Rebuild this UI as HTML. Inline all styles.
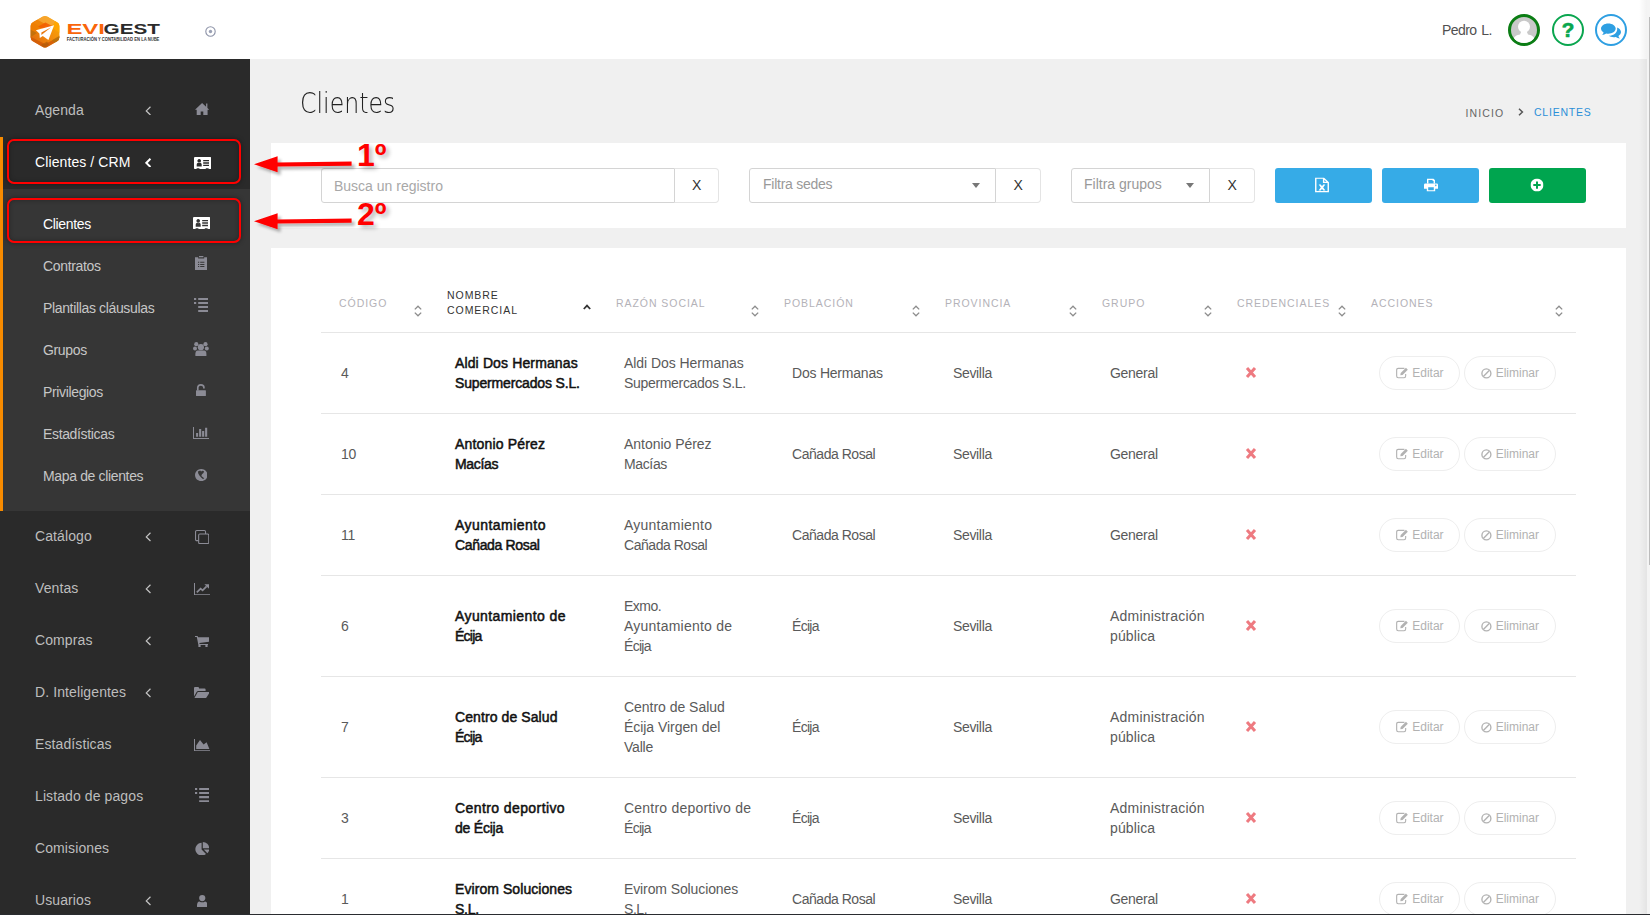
<!DOCTYPE html>
<html lang="es">
<head>
<meta charset="utf-8">
<title>Clientes - Evigest</title>
<style>
*{box-sizing:border-box;margin:0;padding:0}
html,body{width:1650px;height:915px;overflow:hidden;background:#f0f0f0;font-family:"Liberation Sans",sans-serif;font-size:14px;color:#333}
#app{position:relative;width:1650px;height:915px;overflow:hidden}
/* header */
#top{position:absolute;left:0;top:0;width:1650px;height:59px;background:#fff}
#logo{position:absolute;left:28px;top:12px}
#tgl{position:absolute;left:204px;top:25px}
#user{position:absolute;left:1442px;top:22px;font-size:14px;color:#505050;line-height:16px;white-space:nowrap;letter-spacing:-.55px;word-spacing:1.2px}
.circ{position:absolute;top:14px;width:32px;height:32px;border-radius:50%;background:#fff}
/* sidebar */
#side{position:absolute;left:0;top:59px;width:250px;height:856px;background:#2a2a2a;color:#bdbdbd;overflow:hidden}
#side .it{position:absolute;left:35px;height:52px;font-size:14px;line-height:50px;white-space:nowrap;letter-spacing:.1px}
#side .it.on{color:#fff}
#side .ic{position:absolute;line-height:0;color:#8b8b95}
#side .ic svg{display:block}
#side .ch{color:#c4c4c4}
#side .it.on + .ch{color:#fff}
#sub{position:absolute;left:0;top:130px;width:250px;height:322px;background:#363636}
#side .si{position:absolute;left:43px;height:42px;font-size:14px;line-height:42px;white-space:nowrap;color:#c6c6c6;letter-spacing:-.35px}
#side .si.on{color:#fff}
#obar{position:absolute;left:0;top:78px;width:3px;height:374px;background:#f78b00}
.rbox{position:absolute;left:6.6px;width:234.8px;border:2px solid #f00;border-radius:7px;box-shadow:0 0 5px rgba(0,0,0,.4), inset 0 0 5px rgba(0,0,0,.3)}
/* main */
#title{position:absolute;left:300px;top:85.3px;font-size:29px;line-height:36px;color:#222;font-weight:200;font-family:"DejaVu Sans Light","DejaVu Sans","Liberation Sans",sans-serif;transform:scaleX(.815);transform-origin:0 0;white-space:nowrap}
#crumb{position:absolute;left:1465.4px;top:105px;font-size:10.5px;line-height:14px;letter-spacing:.7px;white-space:nowrap;color:#666}
#crumb b{font-weight:normal;color:#2b8fd8}
.panel{position:absolute;left:271px;width:1355px;background:#fff}
#tools{top:143px;height:85px}
#tbl{top:248px;height:680px}
.inp{position:absolute;top:25px;height:35px;border:1px solid #d4d4d4;border-radius:3px;background:#fff;font-size:14px;line-height:33px;color:#999;white-space:nowrap}
.xb{position:absolute;top:25px;height:35px;width:44.4px;border:1px solid #e4e4e4;border-left:0;border-radius:0 4px 4px 0;text-align:center;line-height:33px;font-size:14px;color:#333}
.caret{position:absolute;top:14px;width:0;height:0;border-left:4px solid transparent;border-right:4px solid transparent;border-top:5px solid #777}
.btn{position:absolute;top:25px;width:97px;height:35px;border-radius:3px}
.btn svg{position:absolute;left:50%;top:50%;transform:translate(-50%,-57%)}
.arw{position:absolute}
.blue{background:#36abe7}
.green{background:#00a54f}
/* table */
table{position:absolute;left:50px;top:29px;border-collapse:collapse;table-layout:fixed;width:1255px}
th{height:55px;border-bottom:1px solid #e6e6e6;text-align:left;vertical-align:middle;font-weight:normal;font-size:10.5px;line-height:15px;letter-spacing:.95px;color:#b4b2b8;padding:0 0 1px 18px;position:relative;text-transform:uppercase}
th.act{color:#333}
th .so{position:absolute;right:7px;top:27.7px}
td{border-bottom:1px solid #e6e6e6;padding:20px 0 20px 26px;vertical-align:middle;font-size:14px;line-height:20px;color:#5a5a5a;letter-spacing:-.2px;white-space:nowrap}
td.c0{padding-left:20px}
td.nm{color:#111;font-weight:normal;-webkit-text-stroke:.5px #111;letter-spacing:0}
.ab{display:inline-block;height:34px;border:1px solid #eee;border-radius:17px;font-size:12px;line-height:32px;color:#b2b2b2;padding:0 0 0 16.2px;vertical-align:middle;white-space:nowrap;letter-spacing:0;width:81px}
.ab.el{width:91.8px;padding-left:16px}
.ab svg{vertical-align:-2px;margin-right:3.9px}
td.ac{padding:0 0 0 26px;white-space:nowrap;font-size:0}
.ab+.ab{margin-left:4px}
/* edges */
#botline{position:absolute;left:0;top:914px;width:1650px;height:1px;background:#2a2c30}
#redge{position:absolute;left:1639px;top:0;width:8px;height:915px;background:linear-gradient(90deg,rgba(0,0,0,0),rgba(0,0,0,.05))}
#rstrip{position:absolute;left:1647px;top:0;width:3px;height:915px;background:#f4f4f4}
#thumb{position:absolute;left:1648.7px;top:17px;width:1.3px;height:548px;background:#bcbcbc}
.ann{position:absolute;font:bold 32px/32px "Liberation Sans",sans-serif;color:#f00;text-shadow:3px 3px 4px rgba(0,0,0,.28)}
</style>
</head>
<body>
<div id="app">
<div id="top"><svg id="logo" width="136" height="38" viewBox="0 0 136 38">
<defs><linearGradient id="hg" x1="1" y1="0" x2="0" y2="1"><stop offset="0" stop-color="#fbb000"/><stop offset=".5" stop-color="#f28a0c"/><stop offset="1" stop-color="#d9620f"/></linearGradient></defs>
<clipPath id="hc"><path d="M14.74 4.59 Q17.00 3.30 19.26 4.59 L29.14 10.21 Q31.40 11.50 31.40 14.10 L31.40 25.30 Q31.40 27.90 29.15 29.20 L19.25 34.90 Q17.00 36.20 14.75 34.90 L4.85 29.20 Q2.60 27.90 2.60 25.30 L2.60 14.10 Q2.60 11.50 4.86 10.21 Z"/></clipPath>
<path d="M14.74 4.59 Q17.00 3.30 19.26 4.59 L29.14 10.21 Q31.40 11.50 31.40 14.10 L31.40 25.30 Q31.40 27.90 29.15 29.20 L19.25 34.90 Q17.00 36.20 14.75 34.90 L4.85 29.20 Q2.60 27.90 2.60 25.30 L2.60 14.10 Q2.60 11.50 4.86 10.21 Z" fill="url(#hg)"/>
<g clip-path="url(#hc)">
<polygon points="17,3.5 29,10.4 17,17 5,10.4" fill="#f7a83a" opacity=".75"/>
<polygon points="2,11 9,7.5 19,13 6,19.5 2,17.5" fill="#ee7d00" opacity=".8"/>
<polygon points="32,11 32,21 24,15.5 27,9" fill="#ffa600" opacity=".9"/>
<polygon points="10,14.5 17.5,10.6 25,14.5 17,18" fill="#f25c00" opacity=".85"/>
<polygon points="2,17.5 9,21 2,25.5" fill="#c0700c" opacity=".9"/>
<polygon points="2,24.5 17,32 32,24.5 32,29 17,37 2,29" fill="#cf5a08" opacity=".8"/>
<polygon points="24,28.2 32,23.5 32,28 27,31" fill="#b8720c" opacity=".9"/>
<polygon points="13,33 19,29.5 21,32.5 17,36" fill="#a85a0a" opacity=".6"/>
</g>
<polygon points="26.1,13.3 7.9,18.2 11.4,21.4 11.8,26.1 14.8,24.1 20.4,27.9" fill="#fff"/>
<polygon points="23.2,15.3 13.4,20.4 13.4,23.1" fill="#e8780e"/>
<text x="38.4" y="22.4" font-family="'Liberation Sans',sans-serif" font-weight="bold" font-size="15.2" textLength="38.6" lengthAdjust="spacingAndGlyphs" fill="#f9650a">EVI</text>
<text x="75.6" y="22.4" font-family="'Liberation Sans',sans-serif" font-weight="bold" font-size="15.2" textLength="56.4" lengthAdjust="spacingAndGlyphs" fill="#2b2b2b">GEST</text>
<text x="38.8" y="28.8" font-family="'Liberation Sans',sans-serif" font-weight="bold" font-size="4.9" textLength="92.6" lengthAdjust="spacingAndGlyphs" fill="#333">FACTURACIÓN Y CONTABILIDAD EN LA NUBE</text>
</svg><svg id="tgl" width="13" height="13" viewBox="0 0 13 13"><circle cx="6.5" cy="6.5" r="4.7" fill="none" stroke="#8d93a8" stroke-width="1.1"/><circle cx="6.5" cy="6.5" r="1.7" fill="#9aa0b4"/></svg><div id="user">Pedro L.</div><div class="circ" style="left:1508px;border:3px solid #0b7d14;background:#c9c9c9;overflow:hidden"><svg width="26" height="26" viewBox="0 0 26 26"><circle cx="13" cy="9.8" r="6" fill="#fff"/><path d="M1 28 Q1 18.5 9 17.5 L10.5 14 H15.5 L17 17.5 Q25 18.5 25 28Z" fill="#fff"/></svg></div><div class="circ" style="left:1552px;border:2px solid #0aa64f;color:#0aa64f;font:bold 20.5px/28.2px 'Liberation Sans',sans-serif;text-align:center;-webkit-text-stroke:.7px #0aa64f">?</div><div class="circ" style="left:1595px;border:2px solid #2e9fe2;color:#2e9fe2"><span style="position:absolute;left:4px;top:7px;line-height:0"><svg width="20" height="16.2" viewBox="0 0 18 15" preserveAspectRatio="none" fill="currentColor" ><path d="M6.6 0.4 C10.2 0.4 13.2 2.5 13.2 5.2 C13.2 7.9 10.2 10 6.6 10 C5.9 10 5.3 9.9 4.7 9.8 C3.7 10.6 2.3 11.1 1 11.1 C1.8 10.4 2.2 9.6 2.3 8.8 C0.9 7.9 0 6.6 0 5.2 C0 2.5 3 0.4 6.6 0.4Z"/><path d="M14.4 4.2 C16.5 5 18 6.6 18 8.4 C18 9.8 17.1 11.1 15.7 12 C15.8 12.8 16.2 13.6 17 14.3 C15.7 14.3 14.3 13.8 13.3 13 C12.7 13.1 12.1 13.2 11.4 13.2 C9.6 13.2 8 12.7 6.9 11.9 C11 11.8 14.6 9.4 14.6 5.6 C14.6 5.1 14.5 4.6 14.4 4.2Z"/></svg></span></div></div>
<div id="side"><div id="sub"></div><div class="it" style="top:26px">Agenda</div><span class="ic ch" style="left:145.4px;top:46.7px;width:6.6px;height:9.8px"><svg width="6.6" height="9.8" viewBox="0 0 7 10" preserveAspectRatio="none" fill="none" ><path d="M5.8 0.8 L1.4 5 L5.8 9.2" fill="none" stroke="currentColor" stroke-width="1.3" stroke-linecap="butt"/></svg></span><span class="ic" style="left:194.9px;top:43.7px;width:14.2px;height:12.4px"><svg width="14.2" height="12.4" viewBox="0 0 14.2 12.4" preserveAspectRatio="none" fill="currentColor" ><path d="M7.1 0 L0 6.8 H1.7 V12.4 H5.7 V8.6 H8.3 V12.4 H12.6 V6.8 H14.2 L12.4 5.1 V0.4 H11.1 V3.8Z"/></svg></span><div class="it on" style="top:78px">Clientes / CRM</div><span class="ic ch" style="left:145.4px;top:98.7px;width:6.6px;height:9.8px"><svg width="6.6" height="9.8" viewBox="0 0 7 10" preserveAspectRatio="none" fill="none" ><path d="M5.8 0.8 L1.4 5 L5.8 9.2" fill="none" stroke="currentColor" stroke-width="2.1" stroke-linecap="butt"/></svg></span><span class="ic" style="left:193.8px;top:98px;width:17.2px;height:12.1px;color:#fff"><svg width="17.2" height="12.1" viewBox="0 0 17.2 12.1" preserveAspectRatio="none" fill="currentColor" ><path fill-rule="evenodd" d="M1 0 H16.2 Q17.2 0 17.2 1 V11.1 Q17.2 12.1 16.2 12.1 H14.6 V11.2 H11.8 V12.1 H5.4 V11.2 H2.6 V12.1 H1 Q0 12.1 0 11.1 V1 Q0 0 1 0Z M5.2 2 A1.8 1.8 0 1 0 5.21 2Z M2.7 9.6 H7.7 V7.6 Q7.7 6 6.5 5.7 Q5.2 6.5 3.9 5.7 Q2.7 6 2.7 7.6Z M9.2 2.9 V4.3 H15 V2.9Z M9.2 5.3 V6.7 H15 V5.3Z M9.2 7.7 V9.1 H15 V7.7Z"/></svg></span><div class="si on" style="top:144px">Clientes</div><div class="si" style="top:186px">Contratos</div><div class="si" style="top:228px">Plantillas cláusulas</div><div class="si" style="top:270px">Grupos</div><div class="si" style="top:312px">Privilegios</div><div class="si" style="top:354px">Estadísticas</div><div class="si" style="top:396px">Mapa de clientes</div><span class="ic" style="left:192.9px;top:157.8px;width:17.2px;height:12.2px;color:#fff"><svg width="17.2" height="12.2" viewBox="0 0 17.2 12.1" preserveAspectRatio="none" fill="currentColor" ><path fill-rule="evenodd" d="M1 0 H16.2 Q17.2 0 17.2 1 V11.1 Q17.2 12.1 16.2 12.1 H14.6 V11.2 H11.8 V12.1 H5.4 V11.2 H2.6 V12.1 H1 Q0 12.1 0 11.1 V1 Q0 0 1 0Z M5.2 2 A1.8 1.8 0 1 0 5.21 2Z M2.7 9.6 H7.7 V7.6 Q7.7 6 6.5 5.7 Q5.2 6.5 3.9 5.7 Q2.7 6 2.7 7.6Z M9.2 2.9 V4.3 H15 V2.9Z M9.2 5.3 V6.7 H15 V5.3Z M9.2 7.7 V9.1 H15 V7.7Z"/></svg></span><span class="ic" style="left:194.8px;top:196.9px;width:12.4px;height:14.1px"><svg width="12.4" height="14.1" viewBox="0 0 12.4 14.1" preserveAspectRatio="none" fill="currentColor" ><path fill-rule="evenodd" d="M4 0 H8.4 V1.2 H12.4 V14.1 H0 V1.2 H4Z M3.2 1.2 V2.6 H9.2 V1.2Z M3 5.8 V6.8 H4.2 V5.8Z M5.2 5.8 V6.8 H9.4 V5.8Z M3 7.9 V8.9 H4.2 V7.9Z M5.2 7.9 V8.9 H9.4 V7.9Z M3 10 V11 H4.2 V10Z M5.2 10 V11 H9.4 V10Z"/></svg></span><span class="ic" style="left:193.8px;top:239px;width:14.4px;height:14px"><svg width="14.4" height="14" viewBox="0 0 14.4 14" preserveAspectRatio="none" fill="currentColor" ><path d="M0 0 H2.2 V2 H0Z M0 4 H2.2 V6 H0Z M4.2 0 H14.4 V2 H4.2Z M4.2 4 H14.4 V6 H4.2Z M4.2 8 H14.4 V10 H4.2Z M4.2 12 H14.4 V14 H4.2Z"/></svg></span><span class="ic" style="left:193.1px;top:282.8px;width:15.8px;height:14.2px"><svg width="15.8" height="14.2" viewBox="0 0 15.8 14.2" preserveAspectRatio="none" fill="currentColor" ><circle cx="3.3" cy="2.2" r="2.1"/><circle cx="12.5" cy="2.2" r="2.1"/><circle cx="2" cy="6.4" r="2"/><circle cx="13.8" cy="6.4" r="2"/><circle cx="7.9" cy="5.2" r="3.1"/><path d="M2.4 14.2 Q2 8.6 4.6 8.6 H11.2 Q13.8 8.6 13.4 14.2Z"/></svg></span><span class="ic" style="left:196px;top:324.9px;width:9.9px;height:12.0px"><svg width="9.9" height="12.0" viewBox="0 0 10 12" preserveAspectRatio="none" fill="currentColor" ><path d="M0.5 6.2 H9.5 Q10 6.2 10 6.7 V11.5 Q10 12 9.5 12 H0.5 Q0 12 0 11.5 V6.7 Q0 6.2 0.5 6.2Z"/><path d="M1.8 6.4 V3.6 Q1.8 0.9 4.9 0.9 Q8 0.9 8 3.6 V4.4" fill="none" stroke="currentColor" stroke-width="1.7"/></svg></span><span class="ic" style="left:192.9px;top:368px;width:16.3px;height:12px"><svg width="16.3" height="12" viewBox="0 0 16.3 12" preserveAspectRatio="none" fill="currentColor" ><path d="M0 0 H1 V11 H16.3 V12 H0Z M3.1 6 H5.1 V9.8 H3.1Z M6.1 2 H8.2 V9.8 H6.1Z M9.1 4 H11.2 V9.8 H9.1Z M12.1 0.8 H14.2 V9.8 H12.1Z"/></svg></span><span class="ic" style="left:194.8px;top:409.9px;width:12.5px;height:12.2px"><svg width="12.5" height="12.2" viewBox="0 0 13 13" preserveAspectRatio="none" fill="currentColor" ><path fill-rule="evenodd" d="M6.5 0 A6.5 6.5 0 1 0 6.51 0Z M3 2.6 L5.4 1.6 L6.4 2.6 L7.6 1.8 L9.4 2.4 L8.8 4.2 L7.2 5.6 L6.6 7.4 L8.6 9 L9.6 10.2 L8.2 10.6 L6.4 9 L4.6 6.8 L3.4 4.8Z"/></svg></span><div class="it" style="top:452px">Catálogo</div><span class="ic ch" style="left:145.4px;top:472.8px;width:6.6px;height:9.8px"><svg width="6.6" height="9.8" viewBox="0 0 7 10" preserveAspectRatio="none" fill="none" ><path d="M5.8 0.8 L1.4 5 L5.8 9.2" fill="none" stroke="currentColor" stroke-width="1.3" stroke-linecap="butt"/></svg></span><div class="it" style="top:504px">Ventas</div><span class="ic ch" style="left:145.4px;top:524.8px;width:6.6px;height:9.8px"><svg width="6.6" height="9.8" viewBox="0 0 7 10" preserveAspectRatio="none" fill="none" ><path d="M5.8 0.8 L1.4 5 L5.8 9.2" fill="none" stroke="currentColor" stroke-width="1.3" stroke-linecap="butt"/></svg></span><div class="it" style="top:556px">Compras</div><span class="ic ch" style="left:145.4px;top:576.8px;width:6.6px;height:9.8px"><svg width="6.6" height="9.8" viewBox="0 0 7 10" preserveAspectRatio="none" fill="none" ><path d="M5.8 0.8 L1.4 5 L5.8 9.2" fill="none" stroke="currentColor" stroke-width="1.3" stroke-linecap="butt"/></svg></span><div class="it" style="top:608px">D. Inteligentes</div><span class="ic ch" style="left:145.4px;top:628.8px;width:6.6px;height:9.8px"><svg width="6.6" height="9.8" viewBox="0 0 7 10" preserveAspectRatio="none" fill="none" ><path d="M5.8 0.8 L1.4 5 L5.8 9.2" fill="none" stroke="currentColor" stroke-width="1.3" stroke-linecap="butt"/></svg></span><div class="it" style="top:660px">Estadísticas</div><div class="it" style="top:712px">Listado de pagos</div><div class="it" style="top:764px">Comisiones</div><div class="it" style="top:816px">Usuarios</div><span class="ic ch" style="left:145.4px;top:836.8px;width:6.6px;height:9.8px"><svg width="6.6" height="9.8" viewBox="0 0 7 10" preserveAspectRatio="none" fill="none" ><path d="M5.8 0.8 L1.4 5 L5.8 9.2" fill="none" stroke="currentColor" stroke-width="1.3" stroke-linecap="butt"/></svg></span><span class="ic" style="left:194.9px;top:470.8px;width:14.3px;height:14.2px"><svg width="14.3" height="14.2" viewBox="0 0 14.3 14.2" preserveAspectRatio="none" fill="currentColor" ><rect x="0.55" y="0.55" width="10" height="10.1" rx="1.2" fill="none" stroke="currentColor" stroke-width="1.1"/><rect x="3.65" y="3.95" width="10.1" height="9.7" rx="1.2" fill="#2a2a2a" stroke="currentColor" stroke-width="1.1"/></svg></span><span class="ic" style="left:193.7px;top:524px;width:16.5px;height:12.2px"><svg width="16.5" height="12.2" viewBox="0 0 16.5 12.2" preserveAspectRatio="none" fill="currentColor" ><path d="M0 0 H1 V11.2 H16.5 V12.2 H0Z"/><path d="M2.8 9.4 L6.6 5.6 L8.6 7.4 L12.6 3.4" fill="none" stroke="currentColor" stroke-width="1.7"/><path d="M10.4 1.2 H15 V5.8Z"/></svg></span><span class="ic" style="left:194.9px;top:576.8px;width:14.2px;height:11.4px"><svg width="14.2" height="11.4" viewBox="0 0 14.2 11.4" preserveAspectRatio="none" fill="currentColor" ><path d="M0 0 H2.6 L3.1 1.2 H14.2 V5.8 L4.4 7 L4.6 8 H13 V9 H3.4 L1.8 1 H0Z"/><rect x="3.4" y="9" width="2.2" height="2.4"/><rect x="10.4" y="9" width="2.2" height="2.4"/></svg></span><span class="ic" style="left:193.9px;top:628px;width:15.5px;height:11.1px"><svg width="15.5" height="11.1" viewBox="0 0 15.5 11.1" preserveAspectRatio="none" fill="currentColor" ><path d="M0 9.4 V1 Q0 0 1 0 H4 Q5 0 5 1 V1.6 H10.6 Q11.6 1.6 11.6 2.6 V4 H4.2 Q3.2 4 2.6 5Z"/><path d="M3.8 5 H15.2 Q15.9 5 15.3 5.9 L12.6 10.3 Q12.2 11.1 11.2 11.1 H0.4Z"/></svg></span><span class="ic" style="left:193.7px;top:679.8px;width:16.5px;height:12.2px"><svg width="16.5" height="12.2" viewBox="0 0 16.5 12.2" preserveAspectRatio="none" fill="currentColor" ><path d="M0 0 H1 V11.2 H16.5 V12.2 H0Z M2.2 10 V6.4 L6 1 L9.6 5.6 L12.6 3.2 L15.4 10Z"/></svg></span><span class="ic" style="left:194.9px;top:728.8px;width:14.3px;height:14.2px"><svg width="14.3" height="14.2" viewBox="0 0 14.4 14" preserveAspectRatio="none" fill="currentColor" ><path d="M0 0 H2.2 V2 H0Z M0 4 H2.2 V6 H0Z M4.2 0 H14.4 V2 H4.2Z M4.2 4 H14.4 V6 H4.2Z M4.2 8 H14.4 V10 H4.2Z M4.2 12 H14.4 V14 H4.2Z"/></svg></span><span class="ic" style="left:194.7px;top:782.7px;width:14.3px;height:13.6px"><svg width="14.3" height="13.6" viewBox="0 0 14.3 13.6" preserveAspectRatio="none" fill="currentColor" ><path d="M6.6 0.8 V7.4 L11 12 A6.4 6.4 0 1 1 6.6 0.8Z"/><path d="M7.8 0 A6.5 6.5 0 0 1 14.3 6.2 H7.8Z"/><path d="M8.8 7.4 H14.3 A6.4 6.4 0 0 1 12.4 11.2Z"/></svg></span><span class="ic" style="left:196.9px;top:835.6px;width:10.5px;height:12.5px"><svg width="10.5" height="12.5" viewBox="0 0 10.5 12.5" preserveAspectRatio="none" fill="currentColor" ><circle cx="5.25" cy="3.1" r="3.1"/><path d="M0 11.4 Q-0.2 6.8 2.4 6.4 Q5.25 8.2 8.1 6.4 Q10.7 6.8 10.5 11.4 Q10.5 12.5 9.4 12.5 H1.1 Q0 12.5 0 11.4Z"/></svg></span><div id="obar"></div><div class="rbox" style="top:80px;height:45px"></div><div class="rbox" style="top:138.9px;height:45px"></div></div>
<div id="main"><div id="title">Clientes</div><div id="crumb"><span style="letter-spacing:1.15px;position:relative;top:.5px">INICIO</span><svg width="6" height="8" viewBox="0 0 6 8" style="margin:0 9.8px 0 13.8px;vertical-align:-.3px"><path d="M1 0.8 L4.4 4 L1 7.2" fill="none" stroke="#555" stroke-width="1.5"/></svg><b style="letter-spacing:.78px">CLIENTES</b></div><div id="tools" class="panel"><div class="inp" style="left:50px;width:354px;padding-left:12px;border-radius:3px 0 0 3px;line-height:35px;color:#a8a8a8">Busca un registro</div><div class="xb" style="left:404px">X</div><div class="inp" style="left:478px;width:247px;padding-left:13px;border-radius:3px 0 0 3px;line-height:31px;letter-spacing:-.25px">Filtra sedes<i class="caret" style="left:222px"></i></div><div class="xb" style="left:725px;width:45.3px">X</div><div class="inp" style="left:800px;width:139px;padding-left:12px;border-radius:3px 0 0 3px;line-height:31px">Filtra grupos<i class="caret" style="left:114px"></i></div><div class="xb" style="left:939px;width:45.3px">X</div><div class="btn blue" style="left:1004px"><svg style="margin-left:-1.4px" width="14" height="15" viewBox="0 0 13 15" preserveAspectRatio="none" fill="none" ><path d="M1.4 0.7 H8 L12.3 5 V14.3 H0.7 V0.7Z M8 0.7 V5 H12.3" fill="none" stroke="#fff" stroke-width="1.3"/><path d="M3.4 7 H5.4 L6.5 8.8 L7.6 7 H9.6 L7.6 10 L9.7 13 H7.6 L6.5 11.2 L5.4 13 H3.3 L5.4 10Z" fill="#fff"/></svg></div><div class="btn blue" style="left:1111px"><svg width="14" height="13" viewBox="0 0 14 13" preserveAspectRatio="none" fill="currentColor" ><path fill-rule="evenodd" d="M3 0 H9.4 L11 1.6 V4.6 H9.6 V2.4 H8.6 V1.4 H4.4 V4.6 H3Z M1.4 4.8 H12.6 Q14 4.8 14 6.2 V10.2 H11.2 V13 H2.8 V10.2 H0 V6.2 Q0 4.8 1.4 4.8Z M4.2 8.6 V11.6 H9.8 V8.6Z M11.8 6 A0.7 0.7 0 1 0 11.81 6Z" fill="#fff"/></svg></div><div class="btn green" style="left:1218px"><svg style="margin-left:-.8px" width="13" height="13" viewBox="0 0 13 13" preserveAspectRatio="none" fill="currentColor" ><path fill-rule="evenodd" d="M6.5 0 A6.5 6.5 0 1 0 6.51 0Z M5.5 2.8 V5.5 H2.8 V7.5 H5.5 V10.2 H7.5 V7.5 H10.2 V5.5 H7.5 V2.8Z" fill="#fff"/></svg></div></div><div id="tbl" class="panel"><table><colgroup><col style="width:108px"><col style="width:169px"><col style="width:168px"><col style="width:161px"><col style="width:157px"><col style="width:135px"><col style="width:134px"><col style="width:223px"></colgroup><thead><tr><th>CÓDIGO<span class="so"><svg width="8" height="12" viewBox="0 0 8 12" preserveAspectRatio="none" fill="none" ><path d="M0.8 4.4 L4 1.2 L7.2 4.4 M0.8 7.6 L4 10.8 L7.2 7.6" stroke="#8c8c8c" stroke-width="1.3" fill="none"/></svg></span></th><th class="act"><span style="position:relative;top:-.8px;display:block">NOMBRE<br>COMERCIAL</span><span class="so" style="top:22px"><svg width="8" height="6" viewBox="0 0 8 6" preserveAspectRatio="none" fill="none" ><path d="M0.8 5 L4 1.6 L7.2 5" stroke="#333" stroke-width="1.8" fill="none"/></svg></span></th><th>RAZÓN SOCIAL<span class="so"><svg width="8" height="12" viewBox="0 0 8 12" preserveAspectRatio="none" fill="none" ><path d="M0.8 4.4 L4 1.2 L7.2 4.4 M0.8 7.6 L4 10.8 L7.2 7.6" stroke="#8c8c8c" stroke-width="1.3" fill="none"/></svg></span></th><th>POBLACIÓN<span class="so"><svg width="8" height="12" viewBox="0 0 8 12" preserveAspectRatio="none" fill="none" ><path d="M0.8 4.4 L4 1.2 L7.2 4.4 M0.8 7.6 L4 10.8 L7.2 7.6" stroke="#8c8c8c" stroke-width="1.3" fill="none"/></svg></span></th><th>PROVINCIA<span class="so"><svg width="8" height="12" viewBox="0 0 8 12" preserveAspectRatio="none" fill="none" ><path d="M0.8 4.4 L4 1.2 L7.2 4.4 M0.8 7.6 L4 10.8 L7.2 7.6" stroke="#8c8c8c" stroke-width="1.3" fill="none"/></svg></span></th><th>GRUPO<span class="so"><svg width="8" height="12" viewBox="0 0 8 12" preserveAspectRatio="none" fill="none" ><path d="M0.8 4.4 L4 1.2 L7.2 4.4 M0.8 7.6 L4 10.8 L7.2 7.6" stroke="#8c8c8c" stroke-width="1.3" fill="none"/></svg></span></th><th>CREDENCIALES<span class="so"><svg width="8" height="12" viewBox="0 0 8 12" preserveAspectRatio="none" fill="none" ><path d="M0.8 4.4 L4 1.2 L7.2 4.4 M0.8 7.6 L4 10.8 L7.2 7.6" stroke="#8c8c8c" stroke-width="1.3" fill="none"/></svg></span></th><th>ACCIONES<span class="so" style="right:13px"><svg width="8" height="12" viewBox="0 0 8 12" preserveAspectRatio="none" fill="none" ><path d="M0.8 4.4 L4 1.2 L7.2 4.4 M0.8 7.6 L4 10.8 L7.2 7.6" stroke="#8c8c8c" stroke-width="1.3" fill="none"/></svg></span></th></tr></thead><tbody><tr><td class="c0">4</td><td class="nm"><span style="letter-spacing:0.13px">Aldi Dos Hermanas</span><br><span style="letter-spacing:-0.16px">Supermercados S.L.</span></td><td><span style="letter-spacing:-0.06px">Aldi Dos Hermanas</span><br><span style="letter-spacing:-0.32px">Supermercados S.L.</span></td><td><span style="letter-spacing:-0.22px">Dos Hermanas</span></td><td><span style="letter-spacing:-0.34px">Sevilla</span></td><td><span style="letter-spacing:-0.30px">General</span></td><td class="cr"><svg width="12" height="11" viewBox="0 0 12 11" preserveAspectRatio="none" fill="none" ><path d="M2 1 L10 10 M10 1 L2 10" stroke="#ee7a80" stroke-width="3" stroke-linecap="butt"/></svg></td><td class="ac"><span class="ab"><svg width="12.2" height="11.4" viewBox="0 0 13 12" preserveAspectRatio="none" fill="currentColor" ><path d="M9 1.4 H2.4 Q0.7 1.4 0.7 3.1 V9.6 Q0.7 11.3 2.4 11.3 H8.6 Q10.3 11.3 10.3 9.6 V7.4" fill="none" stroke="currentColor" stroke-width="1.2"/><path d="M4.6 8.6 L5 6.4 L10.6 0.8 L12.6 2.8 L7 8.4Z"/></svg>Editar</span><span class="ab el"><svg width="10.8" height="10.8" viewBox="0 0 12 12" preserveAspectRatio="none" fill="none" ><circle cx="6" cy="6" r="5" fill="none" stroke="currentColor" stroke-width="1.5"/><path d="M2.6 9.4 L9.4 2.6" stroke="currentColor" stroke-width="1.5"/></svg>Eliminar</span></td></tr><tr><td class="c0">10</td><td class="nm"><span style="letter-spacing:0.17px">Antonio Pérez</span><br><span style="letter-spacing:-0.32px">Macías</span></td><td><span style="letter-spacing:-0.03px">Antonio Pérez</span><br><span style="letter-spacing:-0.36px">Macías</span></td><td><span style="letter-spacing:-0.46px">Cañada Rosal</span></td><td><span style="letter-spacing:-0.34px">Sevilla</span></td><td><span style="letter-spacing:-0.30px">General</span></td><td class="cr"><svg width="12" height="11" viewBox="0 0 12 11" preserveAspectRatio="none" fill="none" ><path d="M2 1 L10 10 M10 1 L2 10" stroke="#ee7a80" stroke-width="3" stroke-linecap="butt"/></svg></td><td class="ac"><span class="ab"><svg width="12.2" height="11.4" viewBox="0 0 13 12" preserveAspectRatio="none" fill="currentColor" ><path d="M9 1.4 H2.4 Q0.7 1.4 0.7 3.1 V9.6 Q0.7 11.3 2.4 11.3 H8.6 Q10.3 11.3 10.3 9.6 V7.4" fill="none" stroke="currentColor" stroke-width="1.2"/><path d="M4.6 8.6 L5 6.4 L10.6 0.8 L12.6 2.8 L7 8.4Z"/></svg>Editar</span><span class="ab el"><svg width="10.8" height="10.8" viewBox="0 0 12 12" preserveAspectRatio="none" fill="none" ><circle cx="6" cy="6" r="5" fill="none" stroke="currentColor" stroke-width="1.5"/><path d="M2.6 9.4 L9.4 2.6" stroke="currentColor" stroke-width="1.5"/></svg>Eliminar</span></td></tr><tr><td class="c0">11</td><td class="nm"><span style="letter-spacing:0.46px">Ayuntamiento</span><br><span style="letter-spacing:-0.34px">Cañada Rosal</span></td><td><span style="letter-spacing:0.24px">Ayuntamiento</span><br><span style="letter-spacing:-0.46px">Cañada Rosal</span></td><td><span style="letter-spacing:-0.46px">Cañada Rosal</span></td><td><span style="letter-spacing:-0.34px">Sevilla</span></td><td><span style="letter-spacing:-0.30px">General</span></td><td class="cr"><svg width="12" height="11" viewBox="0 0 12 11" preserveAspectRatio="none" fill="none" ><path d="M2 1 L10 10 M10 1 L2 10" stroke="#ee7a80" stroke-width="3" stroke-linecap="butt"/></svg></td><td class="ac"><span class="ab"><svg width="12.2" height="11.4" viewBox="0 0 13 12" preserveAspectRatio="none" fill="currentColor" ><path d="M9 1.4 H2.4 Q0.7 1.4 0.7 3.1 V9.6 Q0.7 11.3 2.4 11.3 H8.6 Q10.3 11.3 10.3 9.6 V7.4" fill="none" stroke="currentColor" stroke-width="1.2"/><path d="M4.6 8.6 L5 6.4 L10.6 0.8 L12.6 2.8 L7 8.4Z"/></svg>Editar</span><span class="ab el"><svg width="10.8" height="10.8" viewBox="0 0 12 12" preserveAspectRatio="none" fill="none" ><circle cx="6" cy="6" r="5" fill="none" stroke="currentColor" stroke-width="1.5"/><path d="M2.6 9.4 L9.4 2.6" stroke="currentColor" stroke-width="1.5"/></svg>Eliminar</span></td></tr><tr><td class="c0">6</td><td class="nm"><span style="letter-spacing:0.40px">Ayuntamiento de</span><br><span style="letter-spacing:-0.76px">Écija</span></td><td><span style="letter-spacing:-0.49px">Exmo.</span><br><span style="letter-spacing:0.23px">Ayuntamiento de</span><br><span style="letter-spacing:-0.71px">Écija</span></td><td><span style="letter-spacing:-0.71px">Écija</span></td><td><span style="letter-spacing:-0.34px">Sevilla</span></td><td><span style="letter-spacing:0.21px">Administración</span><br><span style="letter-spacing:0.11px">pública</span></td><td class="cr"><svg width="12" height="11" viewBox="0 0 12 11" preserveAspectRatio="none" fill="none" ><path d="M2 1 L10 10 M10 1 L2 10" stroke="#ee7a80" stroke-width="3" stroke-linecap="butt"/></svg></td><td class="ac"><span class="ab"><svg width="12.2" height="11.4" viewBox="0 0 13 12" preserveAspectRatio="none" fill="currentColor" ><path d="M9 1.4 H2.4 Q0.7 1.4 0.7 3.1 V9.6 Q0.7 11.3 2.4 11.3 H8.6 Q10.3 11.3 10.3 9.6 V7.4" fill="none" stroke="currentColor" stroke-width="1.2"/><path d="M4.6 8.6 L5 6.4 L10.6 0.8 L12.6 2.8 L7 8.4Z"/></svg>Editar</span><span class="ab el"><svg width="10.8" height="10.8" viewBox="0 0 12 12" preserveAspectRatio="none" fill="none" ><circle cx="6" cy="6" r="5" fill="none" stroke="currentColor" stroke-width="1.5"/><path d="M2.6 9.4 L9.4 2.6" stroke="currentColor" stroke-width="1.5"/></svg>Eliminar</span></td></tr><tr><td class="c0">7</td><td class="nm"><span style="letter-spacing:0.09px">Centro de Salud</span><br><span style="letter-spacing:-0.76px">Écija</span></td><td><span style="letter-spacing:-0.03px">Centro de Salud</span><br><span style="letter-spacing:-0.05px">Écija Virgen del</span><br><span style="letter-spacing:-0.20px">Valle</span></td><td><span style="letter-spacing:-0.71px">Écija</span></td><td><span style="letter-spacing:-0.34px">Sevilla</span></td><td><span style="letter-spacing:0.21px">Administración</span><br><span style="letter-spacing:0.11px">pública</span></td><td class="cr"><svg width="12" height="11" viewBox="0 0 12 11" preserveAspectRatio="none" fill="none" ><path d="M2 1 L10 10 M10 1 L2 10" stroke="#ee7a80" stroke-width="3" stroke-linecap="butt"/></svg></td><td class="ac"><span class="ab"><svg width="12.2" height="11.4" viewBox="0 0 13 12" preserveAspectRatio="none" fill="currentColor" ><path d="M9 1.4 H2.4 Q0.7 1.4 0.7 3.1 V9.6 Q0.7 11.3 2.4 11.3 H8.6 Q10.3 11.3 10.3 9.6 V7.4" fill="none" stroke="currentColor" stroke-width="1.2"/><path d="M4.6 8.6 L5 6.4 L10.6 0.8 L12.6 2.8 L7 8.4Z"/></svg>Editar</span><span class="ab el"><svg width="10.8" height="10.8" viewBox="0 0 12 12" preserveAspectRatio="none" fill="none" ><circle cx="6" cy="6" r="5" fill="none" stroke="currentColor" stroke-width="1.5"/><path d="M2.6 9.4 L9.4 2.6" stroke="currentColor" stroke-width="1.5"/></svg>Eliminar</span></td></tr><tr><td class="c0">3</td><td class="nm"><span style="letter-spacing:0.41px">Centro deportivo</span><br><span style="letter-spacing:-0.23px">de Écija</span></td><td><span style="letter-spacing:0.22px">Centro deportivo de</span><br><span style="letter-spacing:-0.71px">Écija</span></td><td><span style="letter-spacing:-0.71px">Écija</span></td><td><span style="letter-spacing:-0.34px">Sevilla</span></td><td><span style="letter-spacing:0.21px">Administración</span><br><span style="letter-spacing:0.11px">pública</span></td><td class="cr"><svg width="12" height="11" viewBox="0 0 12 11" preserveAspectRatio="none" fill="none" ><path d="M2 1 L10 10 M10 1 L2 10" stroke="#ee7a80" stroke-width="3" stroke-linecap="butt"/></svg></td><td class="ac"><span class="ab"><svg width="12.2" height="11.4" viewBox="0 0 13 12" preserveAspectRatio="none" fill="currentColor" ><path d="M9 1.4 H2.4 Q0.7 1.4 0.7 3.1 V9.6 Q0.7 11.3 2.4 11.3 H8.6 Q10.3 11.3 10.3 9.6 V7.4" fill="none" stroke="currentColor" stroke-width="1.2"/><path d="M4.6 8.6 L5 6.4 L10.6 0.8 L12.6 2.8 L7 8.4Z"/></svg>Editar</span><span class="ab el"><svg width="10.8" height="10.8" viewBox="0 0 12 12" preserveAspectRatio="none" fill="none" ><circle cx="6" cy="6" r="5" fill="none" stroke="currentColor" stroke-width="1.5"/><path d="M2.6 9.4 L9.4 2.6" stroke="currentColor" stroke-width="1.5"/></svg>Eliminar</span></td></tr><tr><td class="c0">1</td><td class="nm"><span style="letter-spacing:0.07px">Evirom Soluciones</span><br><span style="letter-spacing:-0.27px">S.L.</span></td><td><span style="letter-spacing:-0.11px">Evirom Soluciones</span><br><span style="letter-spacing:-0.43px">S.L.</span></td><td><span style="letter-spacing:-0.46px">Cañada Rosal</span></td><td><span style="letter-spacing:-0.34px">Sevilla</span></td><td><span style="letter-spacing:-0.30px">General</span></td><td class="cr"><svg width="12" height="11" viewBox="0 0 12 11" preserveAspectRatio="none" fill="none" ><path d="M2 1 L10 10 M10 1 L2 10" stroke="#ee7a80" stroke-width="3" stroke-linecap="butt"/></svg></td><td class="ac"><span class="ab"><svg width="12.2" height="11.4" viewBox="0 0 13 12" preserveAspectRatio="none" fill="currentColor" ><path d="M9 1.4 H2.4 Q0.7 1.4 0.7 3.1 V9.6 Q0.7 11.3 2.4 11.3 H8.6 Q10.3 11.3 10.3 9.6 V7.4" fill="none" stroke="currentColor" stroke-width="1.2"/><path d="M4.6 8.6 L5 6.4 L10.6 0.8 L12.6 2.8 L7 8.4Z"/></svg>Editar</span><span class="ab el"><svg width="10.8" height="10.8" viewBox="0 0 12 12" preserveAspectRatio="none" fill="none" ><circle cx="6" cy="6" r="5" fill="none" stroke="currentColor" stroke-width="1.5"/><path d="M2.6 9.4 L9.4 2.6" stroke="currentColor" stroke-width="1.5"/></svg>Eliminar</span></td></tr></tbody></table></div></div>
<svg width="0" height="0" style="position:absolute"><defs><filter id="ds" x="-20%" y="-50%" width="140%" height="220%"><feGaussianBlur in="SourceAlpha" stdDeviation="1.6"/><feOffset dx="2.5" dy="2.5"/><feComponentTransfer><feFuncA type="linear" slope=".3"/></feComponentTransfer><feMerge><feMergeNode/><feMergeNode in="SourceGraphic"/></feMerge></filter></defs></svg><svg class="arw" style="left:250px;top:150px" width="110" height="30" viewBox="0 0 110 30">
<g filter="url(#ds)"><path d="M4 14.3 L27.6 6.2 V12.4 L101.6 11.6 V15.8 L27.6 16.6 V22.2Z" fill="#f00"/></g></svg><svg class="arw" style="left:250px;top:207px" width="110" height="30" viewBox="0 0 110 30">
<g filter="url(#ds)"><path d="M4 14.3 L27.6 6.2 V12.4 L101.6 11.6 V15.8 L27.6 16.6 V22.2Z" fill="#f00"/></g></svg><div class="ann" style="left:357px;top:139px">1º</div><div class="ann" style="left:357px;top:197.8px">2º</div>
<div id="redge"></div><div id="rstrip"></div><div id="thumb"></div><div id="botline"></div>
</div>
</body>
</html>
